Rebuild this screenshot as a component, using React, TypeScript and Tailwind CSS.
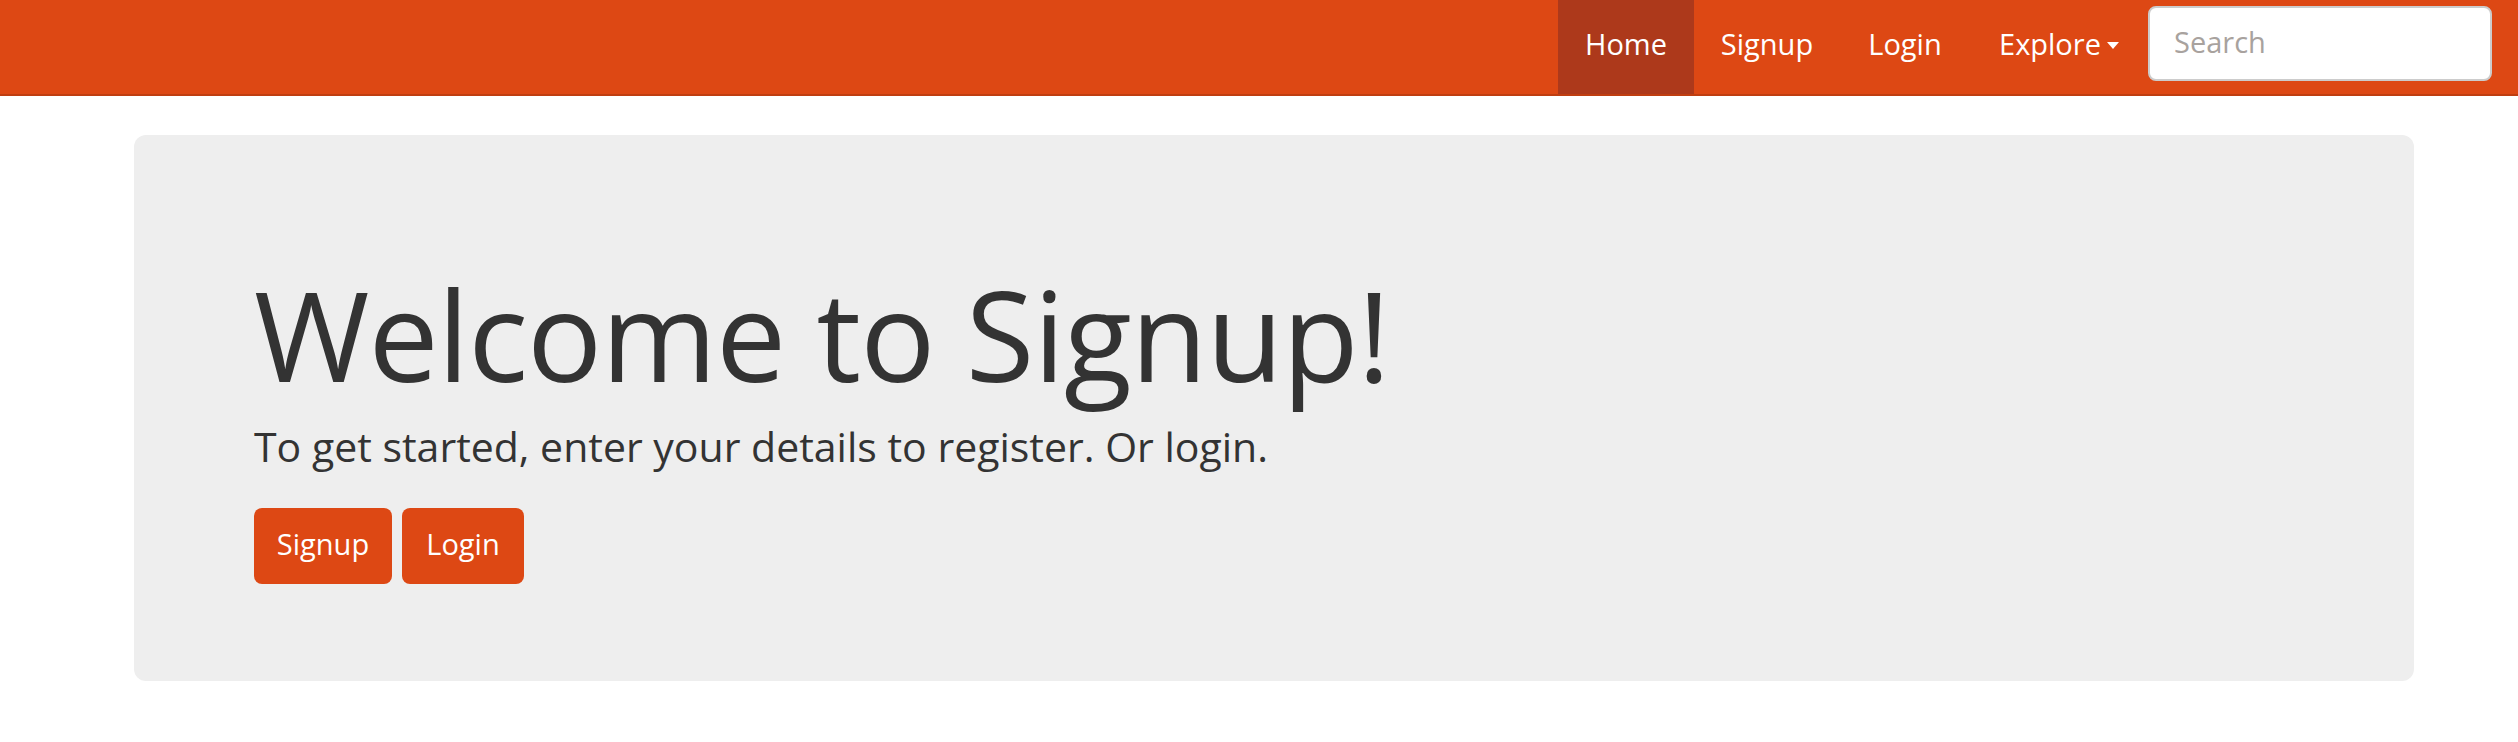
export default function App() {
  return (
    <div className="min-h-[742px] bg-white font-['Open_Sans',sans-serif] font-medium text-[#333333]">

      {/* Navbar */}
      <nav className="flex h-[96px] justify-end border-b-2 border-[#bf3e11] bg-[#dd4814]">
        <ul className="flex h-[94px] items-stretch text-[29px] text-white">
          <li>
            <a href="#" className="flex h-full w-[136px] items-center justify-center bg-[#ad391b] pb-[7px]">
              Home
            </a>
          </li>
          <li>
            <a href="#" className="flex h-full w-[146px] items-center justify-center pb-[7px]">
              Signup
            </a>
          </li>
          <li>
            <a href="#" className="flex h-full w-[130px] items-center justify-center pb-[7px]">
              Login
            </a>
          </li>
          <li>
            <a href="#" className="flex h-full w-[178px] items-center justify-center gap-[6px] pb-[7px]">
              <span>Explore</span>
              <span className="mt-[4px] h-0 w-0 border-x-[6px] border-t-[7px] border-x-transparent border-t-white" />
            </a>
          </li>
        </ul>
        <form className="ml-0 mr-[26px] mt-[6px]">
          <input
            type="text"
            placeholder="Search"
            className="h-[75px] w-[344px] rounded-[8px] border-2 border-[#cccccc] bg-white px-[24px] pb-[4px] text-[29px] text-[#555555] outline-none placeholder:text-[#a8a29e]"
          />
        </form>
      </nav>

      {/* Jumbotron */}
      <div className="ml-[134px] mt-[39px] w-[2280px] rounded-[12px] bg-[#eeeeee] pb-[97px] pl-[120px] pt-[136px]">
        <h1 className="text-[125px] leading-none tracking-[-1px]">Welcome to Signup!</h1>
        <p className="mt-[30px] text-[41px] leading-none">
          To get started, enter your details to register. Or login.
        </p>
        <div className="mt-[41px] flex gap-[10px]">
          <a href="#" className="flex h-[76px] w-[138px] items-center justify-center rounded-[8px] bg-[#dd4814] pb-[4px] text-[29px] text-white">
            Signup
          </a>
          <a href="#" className="flex h-[76px] w-[122px] items-center justify-center rounded-[8px] bg-[#dd4814] pb-[4px] text-[29px] text-white">
            Login
          </a>
        </div>
      </div>

    </div>
  );
}
